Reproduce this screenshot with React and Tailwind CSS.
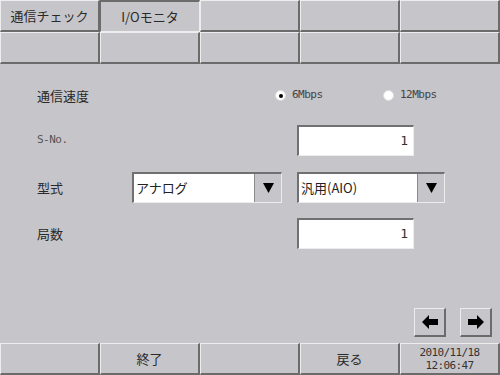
import React from "react";
import clsx from "clsx";

const FONT = "font-['Noto_Sans_CJK_JP','Noto_Sans',sans-serif]";

function Cell({ children, active, className }) {
  return (
    <div
      className={clsx(
        "flex items-center justify-center h-8 bg-[#c6c5c9] text-[13px] text-[#2a2a2a] leading-none",
        active
          ? "border-t-2 border-l border-b border-r border-t-[#6b6b6b] border-l-[#6b6b6b] border-b-[#ededed] border-r-[#ededed]"
          : "border-t border-l border-b-2 border-r-2 border-t-[#ededed] border-l-[#ededed] border-b-[#6b6b6b] border-r-[#6b6b6b]",
        className
      )}
    >
      {children}
    </div>
  );
}

function Radio({ checked, label, className }) {
  return (
    <div className={clsx("flex items-center", className)}>
      <span className="w-[11px] h-[11px] rounded-full bg-white border border-[#dcdcdc] flex items-center justify-center">
        {checked && <span className="w-[4px] h-[4px] rounded-full bg-black" />}
      </span>
      <span className="ml-[6px] text-[11px] text-[#444] font-['DejaVu_Sans_Mono',monospace] tracking-[-0.5px]">
        {label}
      </span>
    </div>
  );
}

function NumBox({ value }) {
  return (
    <div className="w-[117px] h-[31px] bg-white border-t-2 border-l-2 border-b border-r border-t-[#707070] border-l-[#707070] border-b-[#ececec] border-r-[#ececec] flex items-center justify-end pr-[5px] text-[13px] text-[#333] font-['DejaVu_Sans_Mono',monospace]">
      {value}
    </div>
  );
}

function Select({ value, className }) {
  return (
    <div
      className={clsx(
        "h-[31px] bg-white border-t-2 border-l-2 border-b border-r border-t-[#707070] border-l-[#707070] border-b-[#ececec] border-r-[#ececec] flex items-stretch",
        className
      )}
    >
      <div className="flex-1 flex items-center pl-[2px] text-[13px] text-[#222]">{value}</div>
      <div className="w-[27px] bg-[#c6c5c9] border-l border-l-[#8a8a8a] flex items-center justify-center">
        <svg width="11" height="10" viewBox="0 0 11 10">
          <polygon points="0,0 11,0 5.5,10" fill="#000" />
        </svg>
      </div>
    </div>
  );
}

function ArrowButton({ dir }) {
  return (
    <button className="w-[32px] h-[29px] bg-[#c6c5c9] border-t border-l border-b-2 border-r-2 border-t-[#ededed] border-l-[#ededed] border-b-[#6b6b6b] border-r-[#6b6b6b] flex items-center justify-center">
      <svg width="16" height="14" viewBox="0 0 16 14">
        {dir === "left" ? (
          <polygon points="0,7 7,0 7,4 16,4 16,10 7,10 7,14" fill="#000" />
        ) : (
          <polygon points="16,7 9,0 9,4 0,4 0,10 9,10 9,14" fill="#000" />
        )}
      </svg>
    </button>
  );
}

export default function App() {
  return (
    <div className={clsx("w-[500px] h-[375px] bg-[#c6c5c9] flex flex-col overflow-hidden", FONT)}>
      {/* Tabs */}
      <div className="grid grid-cols-5">
        <Cell>通信チェック</Cell>
        <Cell active>I/Oモニタ</Cell>
        <Cell />
        <Cell />
        <Cell />
        <Cell />
        <Cell />
        <Cell />
        <Cell />
        <Cell />
      </div>

      {/* Settings */}
      <div className="flex-1 flex flex-col pl-[37px] pt-4 text-[13px] text-[#2a2a2a]">
        <div className="h-[31px] flex items-center">
          <div className="w-[238px]">通信速度</div>
          <Radio checked label="6Mbps" className="w-[108px]" />
          <Radio label="12Mbps" />
        </div>

        <div className="h-[31px] mt-[14px] flex items-center">
          <div className="w-[260px] text-[#555] font-['DejaVu_Sans_Mono',monospace] text-[11px] tracking-[-0.5px]">S-No.</div>
          <NumBox value="1" />
        </div>

        <div className="h-[31px] mt-[16px] flex items-center">
          <div className="w-[95px]">型式</div>
          <Select value="アナログ" className="w-[150px]" />
          <Select value="汎用(AIO)" className="w-[148px] ml-[15px]" />
        </div>

        <div className="h-[31px] mt-[15px] flex items-center">
          <div className="w-[260px]">局数</div>
          <NumBox value="1" />
        </div>

        <div className="mt-auto mb-[6px] flex justify-end gap-[14px] pr-[8px]">
          <ArrowButton dir="left" />
          <ArrowButton dir="right" />
        </div>
      </div>

      {/* Footer */}
      <div className="grid grid-cols-5">
        <Cell />
        <Cell>終了</Cell>
        <Cell />
        <Cell>戻る</Cell>
        <Cell>
          <div className="flex flex-col items-center font-['DejaVu_Sans_Mono',monospace] text-[11px] leading-[13px] tracking-[-0.6px] text-[#333]">
            <span>2010/11/18</span>
            <span>12:06:47</span>
          </div>
        </Cell>
      </div>
    </div>
  );
}
